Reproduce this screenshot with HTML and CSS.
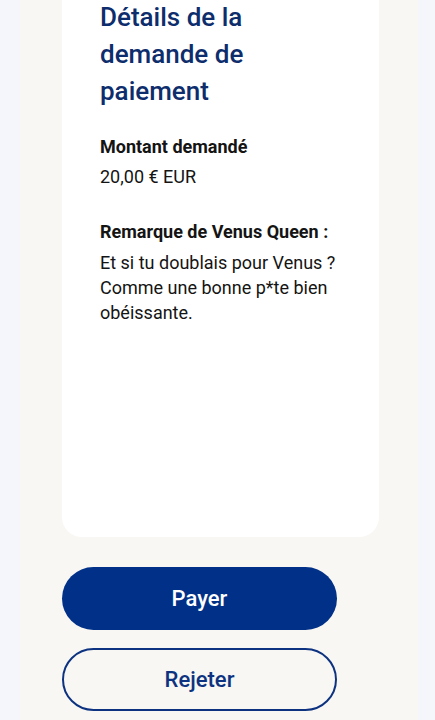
FILE: index.html
```html
<!DOCTYPE html>
<html lang="fr">
<head>
    <meta charset="UTF-8">
    <meta name="viewport" content="width=device-width, initial-scale=1.0">
    <title>Demande de paiement</title>
    <link rel="stylesheet" href="styles.css">
</head>
<body>
    <div class="panel">
        <div class="card">
            <h1 class="title">Détails de la demande de paiement</h1>

            <div class="field">
                <p class="label">Montant demandé</p>
                <p class="value">20,00 € EUR</p>
            </div>

            <div class="field note">
                <p class="label">Remarque de Venus Queen :</p>
                <p class="value">Et si tu doublais pour Venus ? Comme une bonne p*te bien obéissante.</p>
            </div>
        </div>

        <div class="actions">
            <button class="btn btn-pay" type="button">Payer</button>
            <button class="btn btn-reject" type="button">Rejeter</button>
        </div>
    </div>
</body>
</html>
```

FILE: styles.css
```css
* {
    margin: 0;
    padding: 0;
    box-sizing: border-box;
}

body {
    font-family: Roboto, "Liberation Sans", Arial, sans-serif;
    background-color: #f5f6fb;
    height: 720px;
    overflow: hidden;
}

.panel {
    display: flow-root;
    margin: 0 17px 0 20px;
    padding: 0 0 0 42px;
    background-color: #f8f7f4;
    height: 720px;
}

.card {
    width: 317px;
    height: 558px;
    margin-top: -21px;
    padding: 20px 30px 0 38px;
    background-color: #ffffff;
    border-radius: 20px;
}

.title {
    color: #0d2d6c;
    font-size: 26px;
    font-weight: 500;
    line-height: 37px;
    width: 200px;
}

.field {
    margin-top: 24px;
    color: #141414;
    font-size: 18px;
    line-height: 25px;
}

.note {
    margin-top: 30px;
}

.label {
    font-weight: 700;
    margin-bottom: 5px;
}

.note .label {
    margin-bottom: 6px;
}

.actions {
    display: flex;
    flex-direction: column;
    gap: 18px;
    margin-top: 30px;
    width: 275px;
}

.btn {
    height: 63px;
    border-radius: 32px;
    font-family: inherit;
    font-size: 22px;
    font-weight: 500;
    cursor: pointer;
}

.btn-pay {
    background-color: #003087;
    color: #ffffff;
    border: none;
}

.btn-reject {
    background-color: transparent;
    color: #0d3380;
    border: 2px solid #0d3380;
}
```
